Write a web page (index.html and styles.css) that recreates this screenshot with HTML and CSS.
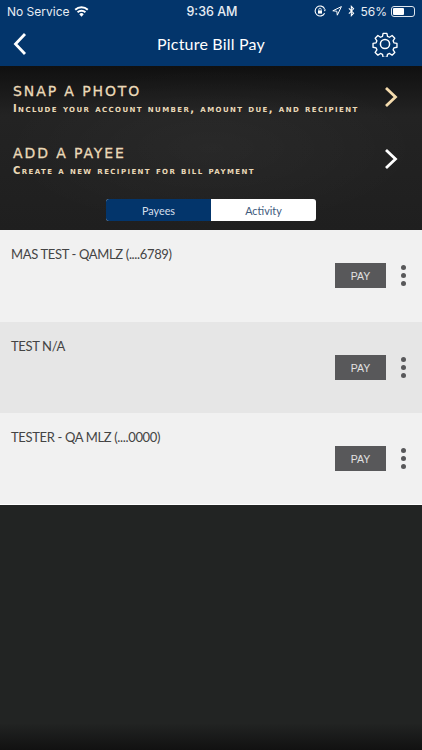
FILE: index.html
```html
<!DOCTYPE html>
<html lang="en">

<head>
    <meta charset="UTF-8" />
    <meta name="viewport" content="width=device-width, initial-scale=1.0" />
    <title>Picture Bill Pay</title>
    <link rel="stylesheet" href="styles.css">
</head>

<body>
    <div class="screen">
        <header class="top">
            <div class="status">
                <div class="status-left">
                    <span>No Service</span>
                    <svg class="wifi" viewBox="0 0 16 12" width="15" height="11">
                        <path d="M8 11.6 5.6 8.9a3.4 3.4 0 0 1 4.8 0z" fill="#fff" />
                        <path d="M4.4 7.6 3 6a7.2 7.2 0 0 1 10 0l-1.4 1.6a5.2 5.2 0 0 0-7.2 0z" fill="#fff" />
                        <path d="M1.9 4.8.4 3.2a11 11 0 0 1 15.2 0l-1.5 1.6a9 9 0 0 0-12.2 0z" fill="#fff" />
                    </svg>
                </div>
                <div class="status-time">9:36 AM</div>
                <div class="status-right">
                    <svg viewBox="0 0 12 12" width="12" height="12">
                        <path d="M10.6 8.2A5 5 0 1 1 10.6 3.8" fill="none" stroke="#fff" stroke-width="1.1" />
                        <path d="M9.6 4.4 12 4.4 10.8 6.4z" fill="#fff" />
                        <rect x="4" y="5.4" width="4" height="3.2" fill="#fff" />
                        <path d="M4.8 5.4V4.4a1.2 1.2 0 0 1 2.4 0v1" fill="none" stroke="#fff" stroke-width=".8" />
                    </svg>
                    <svg class="arrow" viewBox="0 0 10 10" width="10" height="10">
                        <path d="M9.4.6 .8 4.8l4 .4.5 4z" fill="none" stroke="#fff" stroke-width="1" stroke-linejoin="round" />
                    </svg>
                    <svg viewBox="0 0 8 13" width="7" height="12">
                        <path d="M1 3.6 6.4 9 3.8 11.8V1.2L6.4 4 1 9.4" fill="none" stroke="#fff" stroke-width="1.2" />
                    </svg>
                    <span class="percent">56%</span>
                    <div class="battery"><div class="battery-fill"></div></div>
                </div>
            </div>
            <nav class="nav">
                <svg viewBox="0 0 14 24" width="14" height="24">
                    <path d="M12 2 2.5 12 12 22" fill="none" stroke="#fff" stroke-width="2.8" />
                </svg>
                <h1 class="nav-title">Picture Bill Pay</h1>
                <svg class="gear" viewBox="0 0 26 26" width="26" height="26">
                    <path d="M10.9 1.2h4.2l.7 3.4 2.2.9 2.9-1.9 3 3-1.9 2.9.9 2.2 3.4.7v4.2l-3.4.7-.9 2.2 1.9 2.9-3 3-2.9-1.9-2.2.9-.7 3.4h-4.2l-.7-3.4-2.2-.9-2.9 1.9-3-3 1.9-2.9-.9-2.2-3.4-.7v-4.2l3.4-.7.9-2.2-1.9-2.9 3-3 2.9 1.9 2.2-.9z" transform="translate(1.3 1.3) scale(.9)" fill="none" stroke="#fff" stroke-width="1.5" stroke-linejoin="round" />
                    <circle cx="13" cy="13" r="4.6" fill="none" stroke="#fff" stroke-width="1.5" />
                </svg>
            </nav>
        </header>

        <section class="hero">
            <div class="action">
                <div class="action-text">
                    <div class="action-title">Snap a photo</div>
                    <div class="action-sub">Include your account number, amount due, and recipient</div>
                </div>
                <svg viewBox="0 0 14 22" width="14" height="22">
                    <path d="M2 2 11.5 11 2 20" fill="none" stroke="#f5dcae" stroke-width="2.8" />
                </svg>
            </div>
            <div class="action">
                <div class="action-text">
                    <div class="action-title">Add a payee</div>
                    <div class="action-sub">Create a new recipient for bill payment</div>
                </div>
                <svg viewBox="0 0 14 22" width="14" height="22">
                    <path d="M2 2 11.5 11 2 20" fill="none" stroke="#fff" stroke-width="2.8" />
                </svg>
            </div>
            <div class="tabs">
                <div class="tab tab-on">Payees</div>
                <div class="tab">Activity</div>
            </div>
        </section>

        <section class="rows">
            <div class="row">
                <div class="row-name">MAS TEST - QAMLZ (....6789)</div>
                <div class="row-actions">
                    <div class="pay">PAY</div>
                    <div class="dots"><i></i><i></i><i></i></div>
                </div>
            </div>
            <div class="row row-alt">
                <div class="row-name">TEST N/A</div>
                <div class="row-actions">
                    <div class="pay">PAY</div>
                    <div class="dots"><i></i><i></i><i></i></div>
                </div>
            </div>
            <div class="row">
                <div class="row-name">TESTER - QA MLZ (....0000)</div>
                <div class="row-actions">
                    <div class="pay">PAY</div>
                    <div class="dots"><i></i><i></i><i></i></div>
                </div>
            </div>
        </section>

        <div class="rest"></div>
    </div>
</body>

</html>
```

FILE: styles.css
```css
html {
    box-sizing: border-box;
    height: 100%;
    font-family: Lato, "Open Sans", sans-serif;
}

*,
*:before,
*:after {
    box-sizing: inherit;
}

:root {
    --navy: #03356b;
    --cream: #ead9b8;
}

body {
    margin: 0;
    height: 100%;
    overflow: hidden;
}

.screen {
    height: 750px;
    display: flex;
    flex-direction: column;
    background-color: #222423;
}

.top {
    height: 66px;
    background-color: var(--navy);
    color: #fff;
}

.status {
    height: 22px;
    padding: 0 7px;
    display: grid;
    grid-template-columns: 1fr auto 1fr;
    align-items: center;
    font-family: Inter, Roboto, sans-serif;
    font-size: 12px;
    color: #e8edf3;
}

.status-left {
    display: flex;
    align-items: center;
    gap: 4px;
}

.status-time {
    margin-left: 2px;
    font-size: 12.5px;
    font-weight: 500;
}

.status-right {
    display: flex;
    justify-content: flex-end;
    align-items: center;
    gap: 6px;
}

.percent {
    margin-left: -1px;
}

.battery {
    width: 24px;
    height: 11px;
    border: 1px solid #dfe6ee;
    border-radius: 3px;
    padding: 1px;
    margin-left: -2px;
}

.battery-fill {
    width: 56%;
    height: 100%;
    background-color: #fff;
    border-radius: 1px;
}

.nav {
    height: 44px;
    padding: 0 13px 1px;
    display: grid;
    grid-template-columns: 1fr auto 1fr;
    align-items: center;
}

.nav-title {
    margin: 0;
    font-size: 16px;
    font-weight: 400;
    letter-spacing: 0.2px;
}

.gear {
    justify-self: end;
    margin-right: 11px;
}

.hero {
    height: 164px;
    background:
        radial-gradient(ellipse at center, rgba(255, 255, 255, 0.03), transparent 70%),
        linear-gradient(#101010, #232323 30%, #1f1f1f 100%);
}

.action {
    height: 62px;
    padding: 0 24px 0 13px;
    display: flex;
    justify-content: space-between;
    align-items: center;
}

.action-text {
    padding-top: 6px;
}

.action-title {
    font-family: "DejaVu Sans", sans-serif;
    font-size: 14px;
    letter-spacing: 1.9px;
    text-transform: uppercase;
    color: var(--cream);
    line-height: 16px;
    -webkit-text-stroke: 0.3px var(--cream);
}

.action-sub {
    font-family: "DejaVu Sans", sans-serif;
    font-size: 10px;
    font-weight: 700;
    font-variant: small-caps;
    letter-spacing: 1.4px;
    color: var(--cream);
    line-height: 16px;
    margin-top: 2px;
    white-space: nowrap;
}

.tabs {
    width: 210px;
    height: 22px;
    margin: 9px auto 0;
    display: flex;
    border-radius: 3px;
    overflow: hidden;
    background-color: #fff;
    font-size: 10.8px;
}

.tab {
    flex: 1;
    display: flex;
    justify-content: center;
    align-items: center;
    color: #3d5a7c;
}

.tab-on {
    background-color: var(--navy);
    color: #d5dfea;
}

.row {
    height: 91px;
    padding: 16px 0 0 11px;
    background-color: #f1f1f1;
}

.row:first-child {
    height: 92px;
}

.row-alt {
    background-color: #e6e6e6;
}

.row-name {
    font-size: 13px;
    letter-spacing: -0.35px;
    line-height: 16px;
    color: #444;
}

.row-actions {
    margin-top: 1px;
    padding-right: 16px;
    display: flex;
    justify-content: flex-end;
    align-items: center;
    gap: 15px;
}

.pay {
    width: 51px;
    height: 25px;
    display: flex;
    justify-content: center;
    align-items: center;
    background-color: #58585a;
    color: #e2e2e2;
    font-family: "Liberation Sans", sans-serif;
    font-size: 10.5px;
}

.dots {
    display: flex;
    flex-direction: column;
    gap: 3px;
}

.dots i {
    width: 5px;
    height: 5px;
    border-radius: 50%;
    background-color: #58585a;
}

.rest {
    flex: 1;
    border-top: 1px solid #fff;
    background: linear-gradient(#222423 89%, #111 100%);
}
```
